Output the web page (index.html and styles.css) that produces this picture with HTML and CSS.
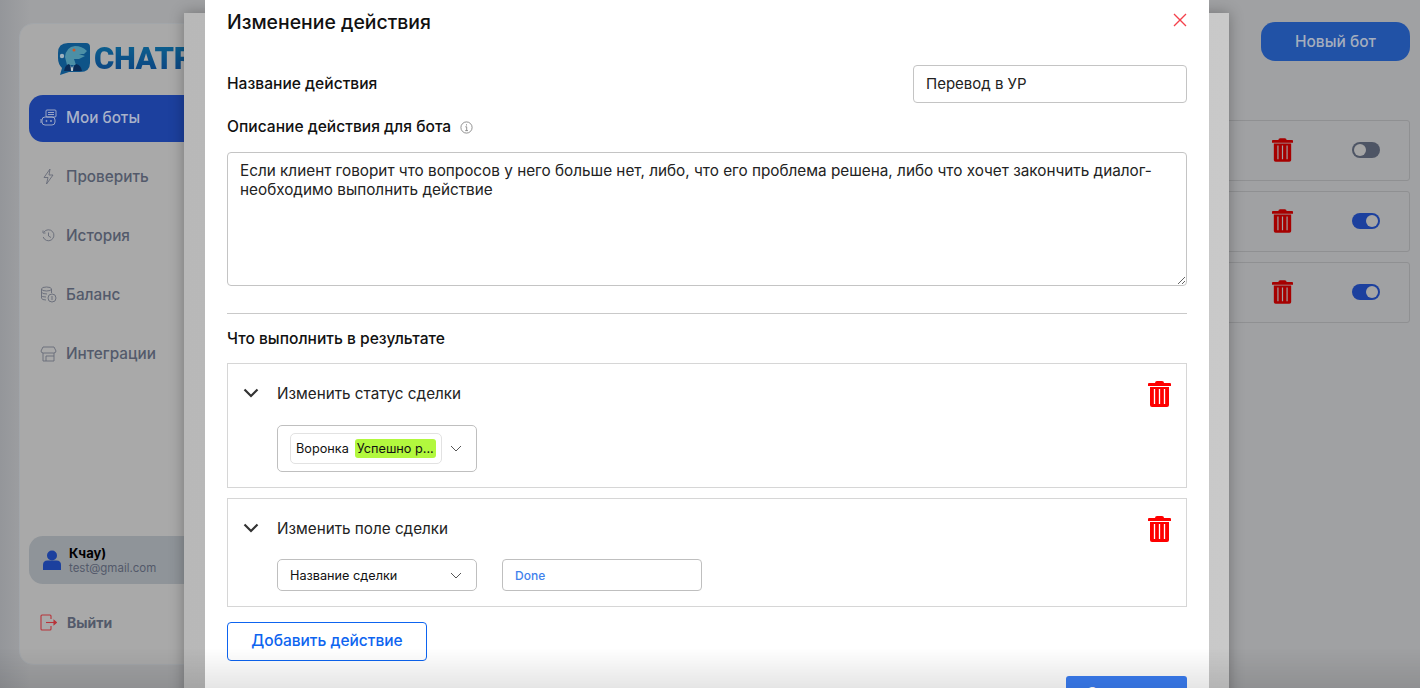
FILE: index.html
```html
<!DOCTYPE html>
<html lang="en">
<head>
    <meta charset="UTF-8" />
    <meta name="viewport" content="width=device-width, initial-scale=1.0" />
    <title>Изменение действия</title>
    <link rel="stylesheet" href="styles.css">
</head>
<body>
    <svg class="defs" width="0" height="0">
        <symbol id="trash" viewBox="0 0 23 26">
            <path d="M7 2 Q7 0 9 0 H14 Q16 0 16 2 H22 Q23 2 23 3 V5 H0 V3 Q0 2 1 2 Z" fill="currentColor"/>
            <path d="M2 6 H21 V24 Q21 26 19 26 H4 Q2 26 2 24 Z" fill="currentColor"/>
            <path d="M6.5 8 V23 M11.5 8 V23 M16.5 8 V23" stroke="var(--stripe)" stroke-width="1.3"/>
        </symbol>
        <symbol id="chevron" viewBox="0 0 16 10">
            <path d="M1.5 1.5 L8 8 L14.5 1.5" fill="none" stroke="currentColor" stroke-width="2.2"/>
        </symbol>
        <symbol id="caret" viewBox="0 0 12 7">
            <path d="M1 1 L6 6 L11 1" fill="none" stroke="currentColor" stroke-width="1"/>
        </symbol>
    </svg>

    <div class="page">
        <aside class="sidebar">
            <div class="logo">
                <svg class="logo-mark" width="32" height="33" viewBox="0 0 32 33">
                    <path d="M10 1 H28 Q32 1 32 5 V21 Q32 30 22 30 H11 L2 33 L4 26 Q0 22 0 16 V11 Q0 1 10 1 Z" fill="#0e5488"/>
                    <circle cx="4" cy="14" r="2.2" fill="#9fb2bd"/>
                    <path d="M7 15 Q8 5 17 4 Q24 4 29 9 L26 12 L21 12 L27 14 L21 17 L16 17 L18 23 H9 Z" fill="#4c8fa6"/>
                    <circle cx="16" cy="8" r="1.5" fill="#c9572a"/>
                    <path d="M6 29 Q7 23 11 22 L14 26 L18 22 Q23 23 24 29 Z" fill="#0a2c58"/>
                    <path d="M12.5 23 L14 26 L15.5 23 L15 29 H13 Z" fill="#b9c7cf"/>
                </svg>
                <span class="logo-text">CHATR</span>
            </div>
            <nav class="nav">
                <a class="nav-item active">
                    <svg width="17" height="17" viewBox="0 0 17 17" fill="none" stroke="currentColor"><rect x="6" y="1" width="10" height="7" rx="1"/><path d="M8 3.5 H14 M8 5.5 H14"/><rect x="2" y="8" width="13" height="8" rx="3"/><path d="M1 10 V14"/><circle cx="6.5" cy="12" r=".6"/><circle cx="11" cy="12" r=".6"/></svg>
                    Мои боты
                </a>
                <a class="nav-item">
                    <svg width="17" height="17" viewBox="0 0 17 17" fill="none" stroke="currentColor"><path d="M10 1 L4 9.5 H8 L6.5 16 L13 7 H9 Z"/></svg>
                    Проверить
                </a>
                <a class="nav-item">
                    <svg width="17" height="17" viewBox="0 0 17 17" fill="none" stroke="currentColor"><path d="M4 5 A5.5 5.5 0 1 1 3.2 10"/><path d="M3 3.5 V6 H5.5"/><path d="M8.5 5.5 V9 L11 10.5"/></svg>
                    История
                </a>
                <a class="nav-item">
                    <svg width="17" height="17" viewBox="0 0 17 17" fill="none" stroke="currentColor"><ellipse cx="6.5" cy="3" rx="5" ry="2"/><path d="M1.5 3 V12 Q1.5 14 6 14 M1.5 6 Q1.5 8 7 8 M1.5 9.5 Q1.5 11 6 11"/><path d="M11.5 3 V7"/><circle cx="12" cy="12" r="4"/><path d="M12 10 V14"/></svg>
                    Баланс
                </a>
                <a class="nav-item">
                    <svg width="17" height="17" viewBox="0 0 17 17" fill="none" stroke="currentColor"><path d="M3 2 H14 L16 6 Q16 8 13.5 8 H3.5 Q1 8 1 6 Z"/><path d="M3 8 V16 H14 V8"/><path d="M6 11 H14 M6 11 V16"/></svg>
                    Интеграции
                </a>
            </nav>
            <div class="sidebar-bottom">
                <div class="user">
                    <svg width="20" height="20" viewBox="0 0 20 20"><circle cx="10" cy="5.5" r="5"/><path d="M1 20 V15 Q1 10.5 5.5 10.5 H14.5 Q19 10.5 19 15 V20 Z"/></svg>
                    <div class="user-text">
                        <div class="user-name">Кчау)</div>
                        <div class="user-mail">test@gmail.com</div>
                    </div>
                </div>
                <a class="logout">
                    <svg width="17" height="17" viewBox="0 0 17 17" fill="none" stroke="#b8343a" stroke-width="1.1"><path d="M10 1 H2 Q1 1 1 2 V15 Q1 16 2 16 H10 Q11 16 11 15 V12 M11 5 V2 Q11 1 10 1"/><path d="M6 8.5 H15"/><path d="M14 6.5 L16.5 8.5 L14 10.5 Z" fill="#b8343a"/></svg>
                    Выйти
                </a>
            </div>
        </aside>
        <main class="main">
            <button class="new-bot">Новый бот</button>
            <div class="bot-row">
                <svg class="row-trash" width="21" height="24"><use href="#trash"/></svg>
                <span class="toggle"></span>
            </div>
            <div class="bot-row">
                <svg class="row-trash" width="21" height="24"><use href="#trash"/></svg>
                <span class="toggle on"></span>
            </div>
            <div class="bot-row">
                <svg class="row-trash" width="21" height="24"><use href="#trash"/></svg>
                <span class="toggle on"></span>
            </div>
        </main>
    </div>

    <div class="modal-wrap">
        <div class="modal">
            <div class="modal-head">
                <h2>Изменение действия</h2>
                <svg class="close-icon" width="14" height="14" viewBox="0 0 14 14"><path d="M1 1 L13 13 M13 1 L1 13" stroke="#f4414b" stroke-width="1.3"/></svg>
            </div>
            <div class="name-row">
                <label>Название действия</label>
                <input class="text-input" type="text" value="Перевод в УР">
            </div>
            <div class="desc-label">
                <label>Описание действия для бота</label>
                <svg width="13" height="13" viewBox="0 0 13 13" fill="none" stroke="#777"><circle cx="6.5" cy="6.5" r="5.6" stroke-width=".8"/><path d="M5.3 5.8 H6.7 V9.6 M5.2 9.6 H8" stroke-width=".8"/><path d="M6.5 3.4 V4.4" stroke-width="1"/></svg>
            </div>
            <textarea class="desc-input">Если клиент говорит что вопросов у него больше нет, либо, что его проблема решена, либо что хочет закончить диалог- необходимо выполнить действие</textarea>
            <hr class="divider">
            <div class="section-title">Что выполнить в результате</div>

            <div class="action-card">
                <div class="action-head">
                    <svg class="chevron" width="16" height="10"><use href="#chevron"/></svg>
                    <span class="action-title">Изменить статус сделки</span>
                    <svg class="action-trash" width="23" height="26"><use href="#trash"/></svg>
                </div>
                <div class="action-body">
                    <div class="select status-select">
                        <div class="tag-box">
                            <span>Воронка</span>
                            <span class="tag">Успешно р...</span>
                        </div>
                        <svg class="caret" width="12" height="7"><use href="#caret"/></svg>
                    </div>
                </div>
            </div>

            <div class="action-card">
                <div class="action-head">
                    <svg class="chevron" width="16" height="10"><use href="#chevron"/></svg>
                    <span class="action-title">Изменить поле сделки</span>
                    <svg class="action-trash" width="23" height="26"><use href="#trash"/></svg>
                </div>
                <div class="action-body compact">
                    <div class="select field-select">
                        <span>Название сделки</span>
                        <svg class="caret" width="12" height="7"><use href="#caret"/></svg>
                    </div>
                    <div class="done-input">Done</div>
                </div>
            </div>

            <button class="add-btn">Добавить действие</button>
            <div class="modal-foot">
                <button class="save-btn">Сохранить</button>
            </div>
        </div>
    </div>
    <div class="bottom-fade"></div>
</body>
</html>
```

FILE: styles.css
```css
* {
    box-sizing: border-box;
    margin: 0;
    padding: 0;
}

html, body {
    height: 100%;
    overflow: hidden;
}

body {
    background: #a0a1a3;
    font-family: Inter, 'Noto Sans', sans-serif;
    color: #111;
}

.defs {
    position: absolute;
}

/* page behind the modal */
.page {
    height: 688px;
    display: flex;
    padding: 23px 10px 23px 19px;
    background: linear-gradient(90deg, #94969a 0, #a0a1a3 30px, #a0a1a3 100%);
}

.sidebar {
    width: 300px;
    flex-shrink: 0;
    display: flex;
    flex-direction: column;
    padding: 0 0 0 9px;
    background: #a9a9a9;
    border: 1px solid #a2a6aa;
    border-radius: 14px;
}

.logo {
    display: flex;
    align-items: center;
    gap: 4px;
    height: 71px;
    padding: 0 0 2px 29px;
}

.logo-text {
    font-family: Roboto, sans-serif;
    font-size: 31px;
    font-weight: 900;
    letter-spacing: -0.4px;
    background: linear-gradient(180deg, #0c6590, #0c3f80);
    -webkit-background-clip: text;
    background-clip: text;
    color: transparent;
}

.nav {
    display: flex;
    flex-direction: column;
}

.nav-item {
    display: flex;
    align-items: center;
    gap: 9px;
    height: 47px;
    margin-bottom: 12px;
    padding: 0 0 3px 11px;
    font-size: 15.3px;
    font-weight: 500;
    color: #535a6b;
    border-radius: 14px 0 0 14px;
}

.nav-item svg {
    stroke-width: 0.9;
    color: #666b78;
    flex-shrink: 0;
}

.nav-item.active {
    background: #1c409e;
    color: #a9b2c9;
}

.nav-item.active svg {
    color: #a9b2c9;
}

.sidebar-bottom {
    margin-top: auto;
    padding-bottom: 33px;
}

.user {
    display: flex;
    align-items: center;
    gap: 7px;
    height: 48px;
    padding-left: 13px;
    background: #8f9499;
    border-radius: 14px 0 0 14px;
}

.user svg {
    fill: #1c409e;
}

.user-name {
    font-size: 13px;
    font-weight: 700;
    color: #000;
}

.user-mail {
    font-size: 11.5px;
    color: #53596a;
}

.logout {
    display: flex;
    align-items: center;
    gap: 10px;
    margin-top: 30px;
    padding-left: 11px;
    font-size: 14px;
    font-weight: 700;
    color: #535a6b;
}

.main {
    flex: 1;
    display: flex;
    flex-direction: column;
    align-items: flex-end;
}

.new-bot {
    width: 149px;
    height: 39px;
    margin: -1px 0 59px;
    background: #2152a6;
    border: none;
    border-radius: 14px;
    font-family: inherit;
    font-size: 15.5px;
    font-weight: 500;
    color: #a5aebd;
}

.bot-row {
    width: 600px;
    height: 61px;
    margin-bottom: 10px;
    display: flex;
    align-items: center;
    justify-content: flex-end;
    padding: 0 29px 2px 0;
    gap: 59px;
    border: 1px solid #8f9092;
    border-radius: 3px;
}

.row-trash {
    color: #a60000;
    --stripe: #a0a1a3;
}

.toggle {
    position: relative;
    width: 28px;
    height: 16px;
    border-radius: 8px;
    background: #4e5565;
}

.toggle::after {
    content: '';
    position: absolute;
    top: 2px;
    left: 2px;
    width: 12px;
    height: 12px;
    border-radius: 50%;
    background: #a5a5a5;
}

.toggle.on {
    background: #1c409e;
}

.toggle.on::after {
    left: 14px;
}

/* modal */
.modal-wrap {
    position: fixed;
    top: 13px;
    left: 184px;
    width: 1045px;
    height: 700px;
    background: linear-gradient(90deg, #b8b8b8, #c9c9c9);
    box-shadow: 0 0 14px rgba(0, 0, 0, 0.3);
}

.modal {
    position: relative;
    top: -13px;
    width: 1004px;
    height: 740px;
    margin-left: 21px;
    padding: 0 22px;
    background: #fff;
}

.modal-head {
    display: flex;
    align-items: center;
    justify-content: space-between;
    height: 45px;
}

.modal-head h2 {
    margin-top: -2px;
    font-size: 19.4px;
    font-weight: 500;
}

.close-icon {
    margin-top: -5px;
}

.name-row {
    display: flex;
    align-items: center;
    justify-content: space-between;
    margin-top: 20px;
}

label {
    position: relative;
    top: -1px;
    font-size: 15.6px;
    font-weight: 500;
}

.text-input {
    width: 274px;
    height: 38px;
    padding: 0 12px 2px;
    border: 1px solid #c4c4c4;
    border-radius: 4px;
    font-family: inherit;
    font-size: 15px;
    color: #222;
}

.desc-label {
    display: flex;
    align-items: center;
    gap: 9px;
    height: 20px;
    margin-top: 14px;
}

.desc-input {
    display: block;
    width: 100%;
    height: 134px;
    margin-top: 15px;
    padding: 8px 12px;
    border: 1px solid #c4c4c4;
    border-radius: 4px;
    font-family: inherit;
    font-size: 15.3px;
    line-height: 19px;
    color: #222;
    outline: none;
}

.divider {
    margin-top: 27px;
    border: none;
    border-top: 1px solid #c9c9c9;
}

.section-title {
    margin-top: 16px;
    font-size: 15.6px;
    font-weight: 500;
    height: 20px;
    line-height: 18px;
}

.action-card {
    margin-top: 13px;
    padding: 0 15px;
    border: 1px solid #d6d6d6;
}

.action-card + .action-card {
    margin-top: 10px;
}

.action-head {
    display: flex;
    align-items: center;
    height: 60px;
}

.chevron {
    color: #333;
    margin: -2px 18px 0 0;
}

.action-title {
    margin-top: -2px;
    font-size: 15.25px;
    color: #222;
}

.action-trash {
    margin-left: auto;
    margin-right: 0;
    color: #fe0000;
    --stripe: #fff;
}

.action-body {
    display: flex;
    gap: 25px;
    padding: 1px 0 15px 34px;
}

.action-body.compact {
    padding-top: 0;
}

.select {
    display: flex;
    align-items: center;
    justify-content: space-between;
    width: 200px;
    border: 1px solid #bfbfbf;
    border-radius: 5px;
    font-size: 12.7px;
    color: #111;
}

.status-select {
    height: 47px;
    padding: 0 14px 0 12px;
}

.tag-box {
    display: flex;
    align-items: center;
    gap: 6px;
    width: 152px;
    height: 31px;
    padding: 0 5px;
    border: 1px solid #e2e2e2;
    border-radius: 5px;
}

.tag {
    padding: 2px;
    background: #b2f83e;
    border-radius: 3px;
    white-space: nowrap;
}

.field-select {
    height: 32px;
    padding: 0 14px 0 12px;
}

.caret {
    color: #555;
}

.done-input {
    width: 200px;
    height: 32px;
    padding: 0 12px;
    line-height: 31px;
    border: 1px solid #bfbfbf;
    border-radius: 4px;
    font-size: 12px;
    font-weight: 500;
    color: #3f81ec;
}

.add-btn {
    display: block;
    width: 200px;
    height: 39px;
    margin-top: 15px;
    padding-bottom: 2px;
    background: #fff;
    border: 1px solid #0d64f0;
    border-radius: 4px;
    font-family: inherit;
    font-size: 15.5px;
    font-weight: 500;
    color: #0d64f0;
}

.modal-foot {
    display: flex;
    justify-content: flex-end;
    margin-top: 15px;
}

.save-btn {
    width: 121px;
    height: 32px;
    background: #3a7df2;
    border: none;
    border-radius: 3px;
    font-family: inherit;
    font-size: 15px;
    font-weight: 500;
    color: #fff;
}

.bottom-fade {
    position: fixed;
    left: 0;
    right: 0;
    bottom: 0;
    height: 40px;
    background: linear-gradient(180deg, rgba(0, 0, 0, 0), rgba(0, 0, 0, 0.1));
    pointer-events: none;
}
```
